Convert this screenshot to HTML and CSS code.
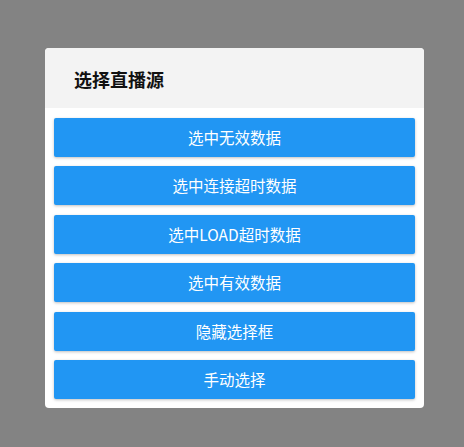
FILE: index.html
```html
<!DOCTYPE html>
<html>
<head>
<meta charset="utf-8">
<link rel="stylesheet" href="styles.css">
</head>
<body>
<div class="dialog">
  <div class="header"><span class="title">选择直播源</span></div>
  <div class="list">
    <div class="btn">选中无效数据</div>
    <div class="btn">选中连接超时数据</div>
    <div class="btn">选中LOAD超时数据</div>
    <div class="btn">选中有效数据</div>
    <div class="btn">隐藏选择框</div>
    <div class="btn">手动选择</div>
  </div>
</div>
</body>
</html>
```
FILE: styles.css
```css
html, body {
  margin: 0;
  padding: 0;
}
body {
  background: #838383;
  width: 464px;
  height: 447px;
  font-family: "Noto Sans CJK SC", "Noto Sans", sans-serif;
  padding-top: 48px;
  padding-left: 45px;
  box-sizing: border-box;
}
.dialog {
  width: 379px;
  height: 360px;
  background: #ffffff;
  border-radius: 4px;
  overflow: hidden;
  display: flex;
  flex-direction: column;
}
.header {
  height: 60px;
  background: #f3f3f3;
  display: flex;
  align-items: center;
  padding-left: 29px;
  flex-shrink: 0;
}
.title {
  font-size: 18px;
  font-weight: bold;
  color: #111;
  line-height: 1;
  margin-top: 1px;
}
.list {
  padding: 10px 9px 9px 9px;
  display: flex;
  flex-direction: column;
  gap: 9.4px;
}
.btn {
  height: 39px;
  background: #2196f3;
  color: #ffffff;
  border-radius: 2px;
  box-shadow: 0 1px 3px rgba(0,0,0,0.25);
  display: flex;
  align-items: center;
  justify-content: center;
  font-size: 15.5px;
  font-weight: 400;
  padding-bottom: 1px;
  box-sizing: border-box;
}
```
